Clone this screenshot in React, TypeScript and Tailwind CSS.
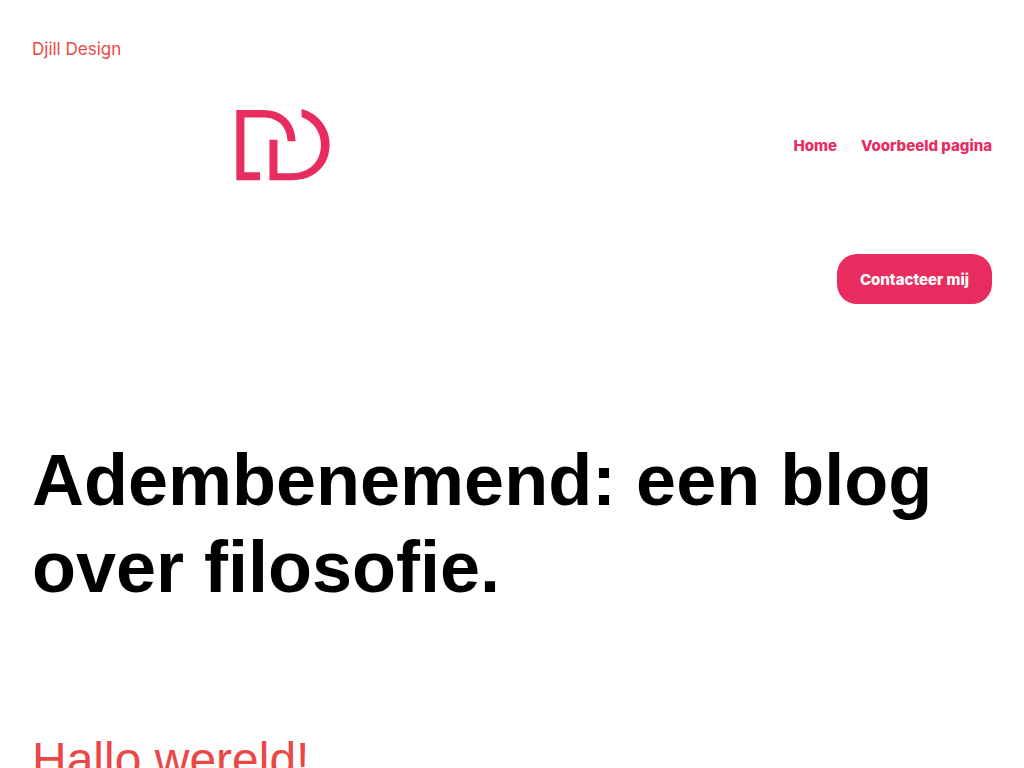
import type { ReactNode } from 'react'

const links = [
  { label: 'Home', href: '#home' },
  { label: 'Voorbeeld pagina', href: '#voorbeeld-pagina' },
]

function Logo() {
  return (
    <svg
      viewBox="50 42 281 215"
      className="w-[94px] h-[72px]"
      fill="#e82c5f"
      role="img"
      aria-label="Djill Design"
    >
      <path d="M51 45H132C186 45 227 79 228 138H204C203 92 173 67 132 67H75V231H122V255H51Z" />
      <path d="M246 42C296 55 330 99 330 148C330 211 284 255 217 255H150V134H174V234H217C270 234 304 199 304 149C304 112 282 79 246 66Z" />
    </svg>
  )
}

function NavLink({ href, children }: { href: string; children: ReactNode }) {
  return (
    <a href={href} className="text-[#e82c5f] hover:underline underline-offset-2">
      {children}
    </a>
  )
}

export default function App() {
  return (
    <div className="min-h-screen bg-white px-8 pt-9 font-['Inter',sans-serif]">
      {/* Header */}
      <header>
        <a href="#top" className="block w-fit text-[17px] leading-[26px] text-[#eb4747]">
          Djill Design
        </a>

        <div className="mt-[47px] flex items-center justify-between">
          <a href="#top" className="flex w-[502px] justify-center">
            <Logo />
          </a>
          <nav className="flex gap-6 pt-0.5 text-[15px] leading-6 font-extrabold">
            {links.map(link => (
              <NavLink key={link.href} href={link.href}>
                {link.label}
              </NavLink>
            ))}
          </nav>
        </div>

        <div className="mt-[73px] flex justify-end">
          <button
            type="button"
            className="h-[50px] rounded-[20px] bg-[#e82c5f] px-[23px] pt-0.5 text-[15px] leading-6 font-extrabold text-white"
          >
            Contacteer mij
          </button>
        </div>
      </header>

      {/* Blog */}
      <main className="mt-[133px] font-['Liberation_Sans',sans-serif]">
        <h1 className="text-7xl leading-[87px] font-bold text-black">
          Adembenemend: een blog over filosofie.
        </h1>
        <article className="mt-[119px]">
          <h2 className="text-5xl leading-[60px]">
            <a href="#hallo-wereld" className="text-[#eb4747]">
              Hallo wereld!
            </a>
          </h2>
        </article>
      </main>
    </div>
  )
}
